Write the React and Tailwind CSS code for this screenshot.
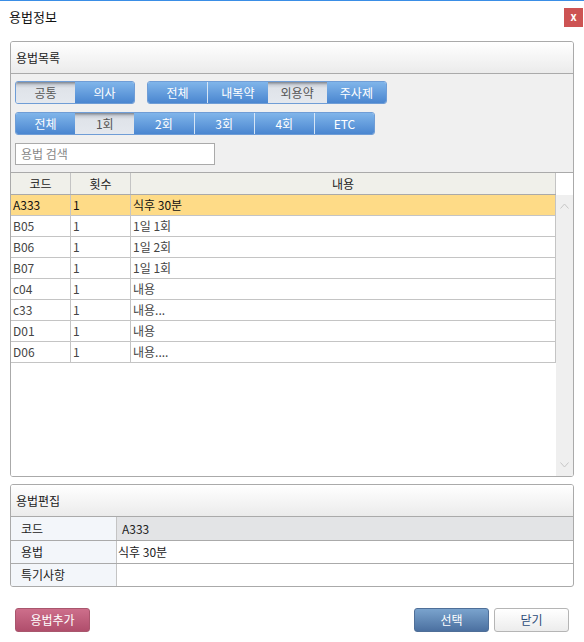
import React from "react";

const activeBtn =
  "bg-[linear-gradient(to_bottom,#80b5ea,#4a86d0)] text-white";
const inactiveBtn =
  "bg-[linear-gradient(to_bottom,#7f8690_0px,#c9ced6_3px,#dfe3e9_6px,#e4e8ee_100%)] text-[#555]";

function Group({ items, width }) {
  return (
    <div
      className={`flex h-[23px] border border-[#6f9dd6] rounded-[3px] overflow-hidden ${width}`}
    >
      {items.map((it, i) => (
        <div
          key={i}
          className={`flex-1 flex items-center justify-center ${
            it.active ? activeBtn : inactiveBtn
          } ${i > 0 && it.active && items[i - 1].active ? "border-l border-[#d6e5f5]" : ""}`}
        >
          {it.label}
        </div>
      ))}
    </div>
  );
}

const rows = [
  ["A333", "1", "식후 30분"],
  ["B05", "1", "1일 1회"],
  ["B06", "1", "1일 2회"],
  ["B07", "1", "1일 1회"],
  ["c04", "1", "내용"],
  ["c33", "1", "내용..."],
  ["D01", "1", "내용"],
  ["D06", "1", "내용...."],
];

export default function App() {
  return (
    <div className="w-[584px] h-[642px] bg-white border-t border-[#3a8ee6] font-['Noto_Sans_CJK_KR',sans-serif] text-[12px] text-[#222] flex flex-col">
      {/* Title bar */}
      <div className="h-[40px] flex justify-between items-start">
        <div className="pl-[9px] pt-[6px] text-[13px] text-[#111]">용법정보</div>
        <div className="mt-[7px] mr-[1px] w-[19px] h-[19px] bg-[#cd5353] text-white font-bold flex items-center justify-center text-[11px] leading-none pb-[2px]">
          x
        </div>
      </div>

      {/* Panel 1 */}
      <div className="mx-[10px] w-[564px] h-[436px] border border-[#aaaaaa] rounded-[3px] flex flex-col bg-[#f0f0f0] overflow-hidden">
        <div className="h-[32px] shrink-0 border-b border-[#aaaaaa] bg-[linear-gradient(to_bottom,#ffffff,#ebebeb)] pl-[5px] flex items-center">
          용법목록
        </div>
        <div className="flex-1 flex flex-col pt-[7px]">
          <div className="px-[4px] flex gap-[12px]">
            <Group
              width="w-[120px]"
              items={[{ label: "공통" }, { label: "의사", active: true }]}
            />
            <Group
              width="w-[240px]"
              items={[
                { label: "전체", active: true },
                { label: "내복약", active: true },
                { label: "외용약" },
                { label: "주사제", active: true },
              ]}
            />
          </div>
          <div className="px-[4px] mt-[8px] flex">
            <Group
              width="w-[360px]"
              items={[
                { label: "전체", active: true },
                { label: "1회" },
                { label: "2회", active: true },
                { label: "3회", active: true },
                { label: "4회", active: true },
                { label: "ETC", active: true },
              ]}
            />
          </div>
          <div className="px-[4px] mt-[8px]">
            <div className="w-[200px] h-[22px] border border-[#aaaaaa] bg-white flex items-center px-[5px] text-[#888]">
              용법 검색
            </div>
          </div>

          {/* Table */}
          <div className="mt-[7px] flex-1 flex flex-col border-t border-[#aaaaaa] bg-white">
            <div className="flex h-[22px] shrink-0">
              <div className="w-[545px] flex bg-[#f0f0ea] border-b border-[#aaaaaa]">
                <div className="w-[60px] border-r border-[#c4c4c4] flex items-center justify-center">코드</div>
                <div className="w-[60px] border-r border-[#c4c4c4] flex items-center justify-center">횟수</div>
                <div className="w-[425px] border-r border-[#c4c4c4] flex items-center justify-center">내용</div>
              </div>
              <div className="flex-1 bg-white"></div>
            </div>
            <div className="flex-1 flex">
              <div className="w-[545px] bg-white">
                {rows.map((r, i) => (
                  <div
                    key={i}
                    className={`flex h-[21px] border-b border-[#c4c4c4] ${
                      i === 0 ? "bg-[#fedb87] text-[#111]" : "text-[#444]"
                    }`}
                  >
                    <div className="w-[60px] border-r border-[#c4c4c4] pl-[2px] flex items-center">{r[0]}</div>
                    <div className="w-[60px] border-r border-[#c4c4c4] pl-[2px] flex items-center">{r[1]}</div>
                    <div className="w-[425px] border-r border-[#c4c4c4] pl-[2px] flex items-center">{r[2]}</div>
                  </div>
                ))}
              </div>
              <div className="flex-1 bg-[#efefef] flex flex-col items-center justify-between py-[8px]">
                <svg width="9" height="6" viewBox="0 0 9 6">
                  <path d="M0.5 5.5 L4.5 1 L8.5 5.5" fill="none" stroke="#c6c6c6" strokeWidth="1" />
                </svg>
                <svg width="9" height="6" viewBox="0 0 9 6">
                  <path d="M0.5 0.5 L4.5 5 L8.5 0.5" fill="none" stroke="#c6c6c6" strokeWidth="1" />
                </svg>
              </div>
            </div>
          </div>
        </div>
      </div>

      {/* Panel 2 */}
      <div className="mx-[10px] mt-[7px] w-[564px] border border-[#aaaaaa] rounded-[3px] flex flex-col overflow-hidden bg-white">
        <div className="h-[32px] border-b border-[#aaaaaa] bg-[linear-gradient(to_bottom,#ffffff,#ebebeb)] pl-[5px] flex items-center">
          용법편집
        </div>
        <div className="flex h-[24px] border-b border-[#aaaaaa]">
          <div className="w-[106px] border-r border-[#c4c4c4] bg-[#f3f6fa] pl-[10px] flex items-center">코드</div>
          <div className="flex-1 bg-[#e3e4e6] pl-[5px] flex items-center">A333</div>
        </div>
        <div className="flex h-[23px] border-b border-[#aaaaaa]">
          <div className="w-[106px] border-r border-[#c4c4c4] bg-[#f3f6fa] pl-[10px] flex items-center">용법</div>
          <div className="flex-1 pl-[1px] flex items-center">식후 30분</div>
        </div>
        <div className="flex h-[22px]">
          <div className="w-[106px] border-r border-[#c4c4c4] bg-[#f3f6fa] pl-[10px] flex items-center">특기사항</div>
          <div className="flex-1"></div>
        </div>
      </div>

      {/* Bottom buttons */}
      <div className="mt-[21px] flex items-center px-[15px]">
        <div className="w-[75px] h-[24px] rounded-[3px] border border-[#a9566d] bg-[linear-gradient(to_bottom,#cd6f8b,#b04e6c)] text-white flex items-center justify-center">
          용법추가
        </div>
        <div className="flex-1"></div>
        <div className="w-[75px] h-[24px] rounded-[3px] border border-[#4f6f98] bg-[linear-gradient(to_bottom,#7aa3cd,#4b70a0)] text-white flex items-center justify-center">
          선택
        </div>
        <div className="ml-[5px] w-[75px] h-[24px] rounded-[3px] border border-[#b5b5b5] bg-[linear-gradient(to_bottom,#ffffff,#ececec)] text-[#2c4c78] flex items-center justify-center">
          닫기
        </div>
      </div>
    </div>
  );
}
